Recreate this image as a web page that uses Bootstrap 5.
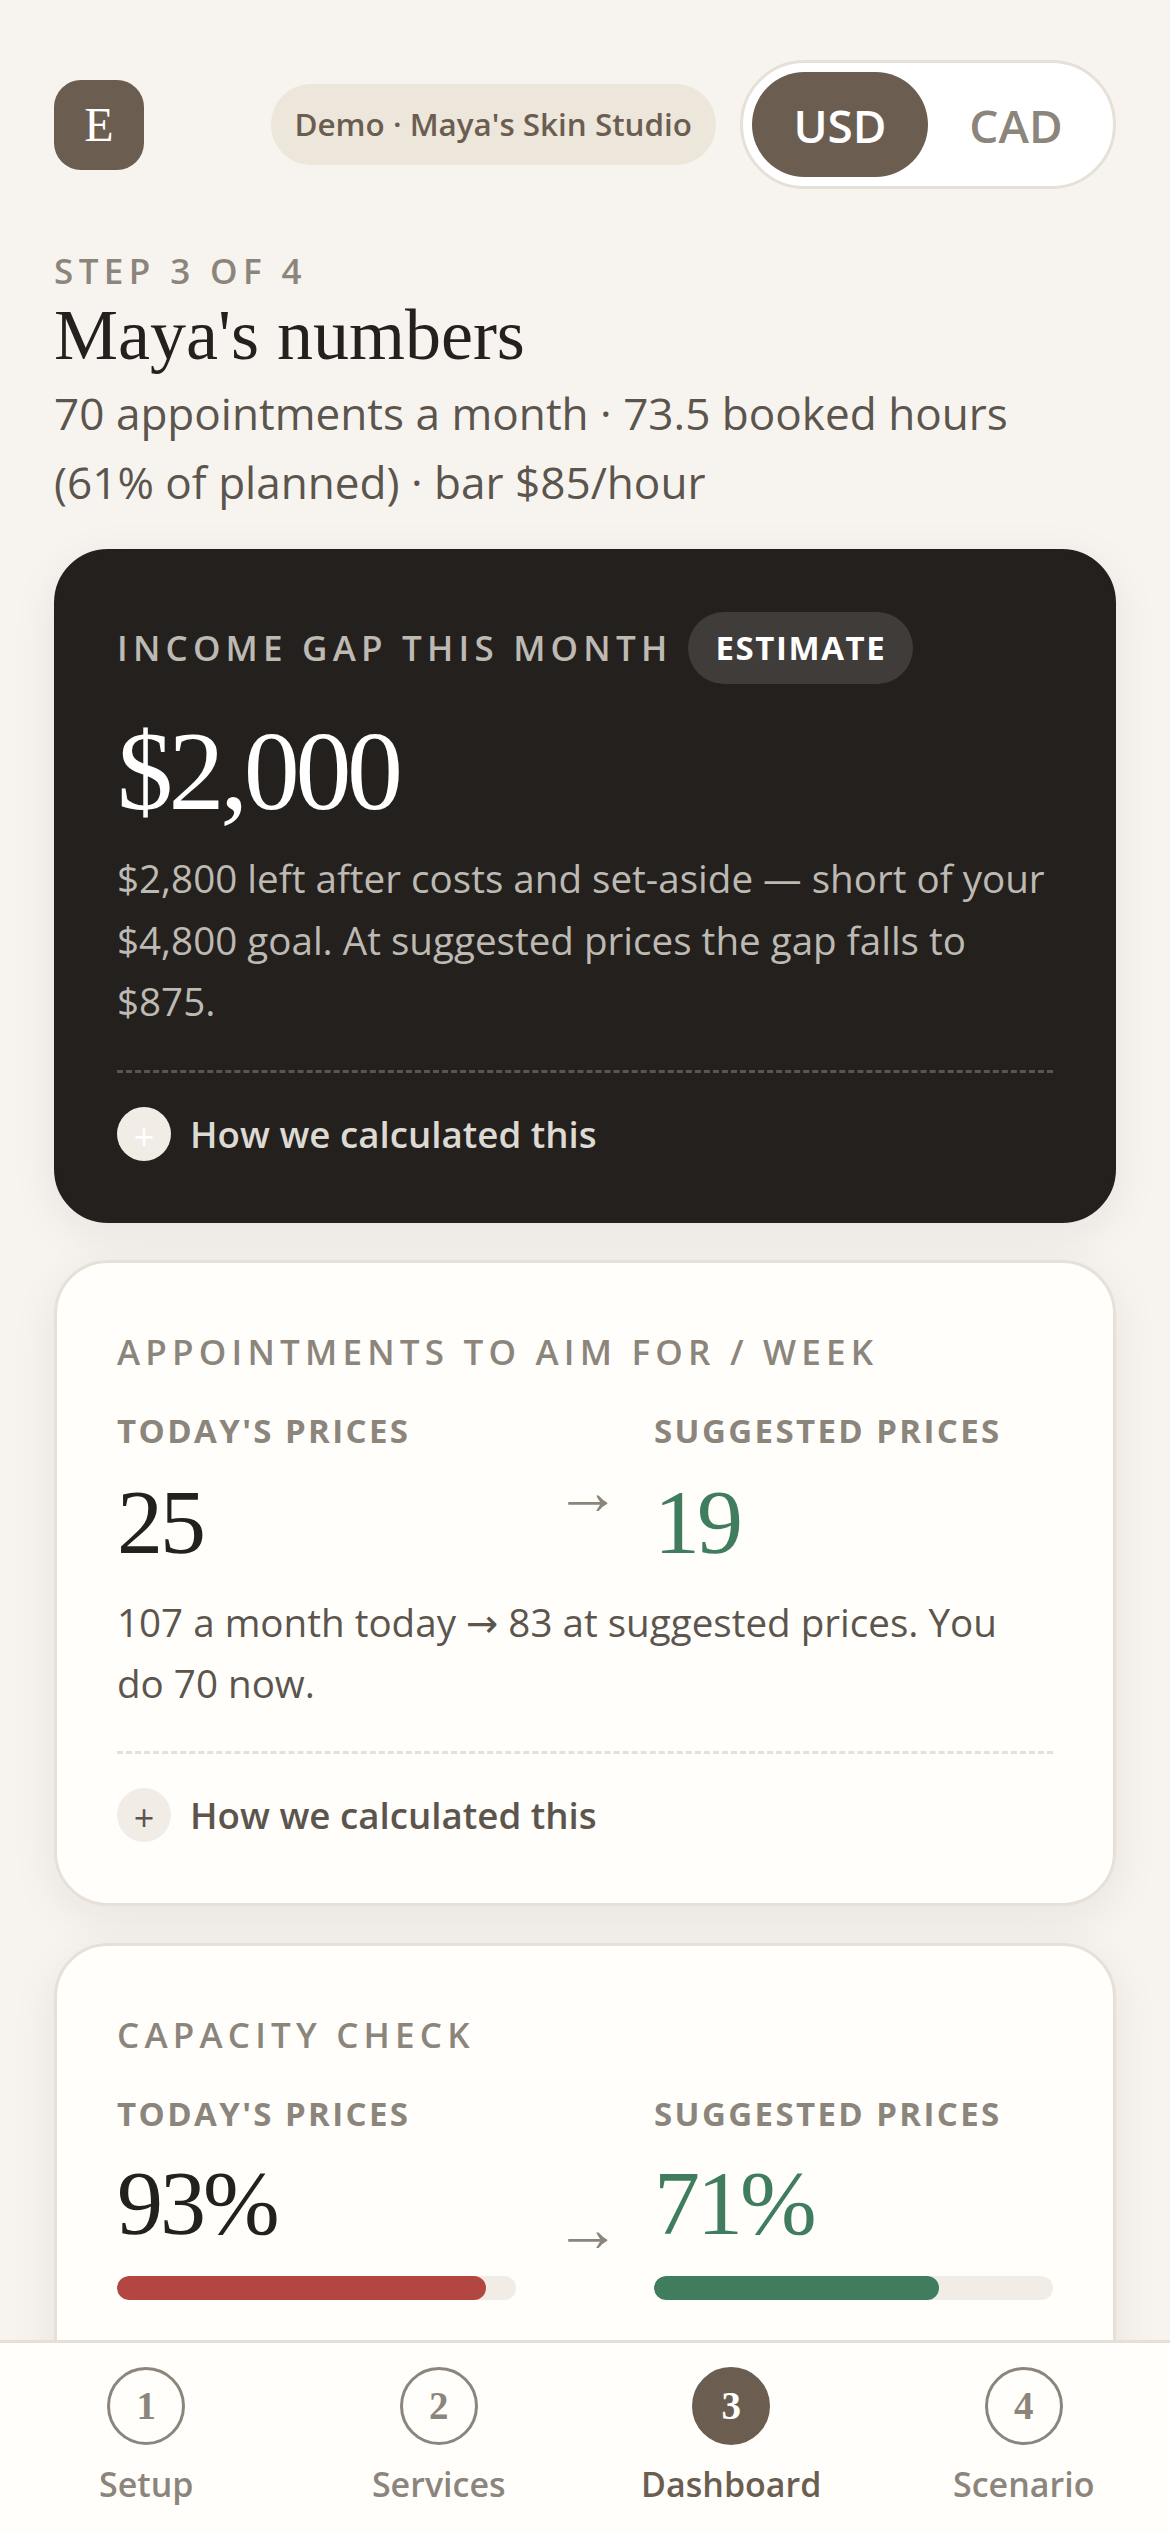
<!doctype html>
<html lang="en">
<head>
<meta charset="utf-8">
<title>Maya's numbers</title>
<link href="https://cdn.jsdelivr.net/npm/bootstrap@5.3.0/dist/css/bootstrap.min.css" rel="stylesheet">
<style>
html,body{height:2532px;overflow:hidden}
body{background:#f7f4ef;font-family:"Open Sans","Noto Sans",sans-serif;color:#23201d}
.serif{font-family:"Liberation Serif",serif}
.shell{padding:60px 54px 0}
.logo{width:90px;height:90px;border-radius:27px;background:#6b5e51;color:#fff;font-size:48px}
.demo-pill{height:81px;padding:0 24px 2px;border-radius:40px;background:#ede6db;color:#6b5e51;font-size:31.4px;font-weight:600;white-space:nowrap}
.toggle{height:129px;width:376px;padding:9px;border:3px solid #e6e0d8;border-radius:65px;background:#fff;margin-left:24px}
.toggle span{height:105px;border-radius:53px;font-size:46px;font-weight:600;color:#8c857c;padding-top:2px}
.toggle .tog-usd{width:177px;background:#6b5e51;color:#fff}
.toggle .tog-cad{width:177px}
.eyebrow{margin-top:58px;font-size:35px;line-height:48px;letter-spacing:5.4px;font-weight:600;color:#8c857c}
.page-title{font-size:72px;line-height:80px;font-weight:400;margin:0;color:#23201d}
.page-sub{font-size:44.1px;line-height:69px;color:#5c554d;margin:4px 0 0}
.stat{border-radius:54px;padding:60px;background:#fffefb;border:3px solid #e6e0d8;box-shadow:0 12px 48px rgba(35,32,29,.07);margin-top:37px}
.stat-dark{background:#24201d;border-color:#24201d;color:#fff;margin-top:32px;padding-bottom:58px}
.stat-last{padding-bottom:240px}
.kicker{font-size:35px;line-height:57px;letter-spacing:5.2px;font-weight:600;color:#8c857c;white-space:nowrap}
.stat-dark .kicker{color:#bdb9b3;line-height:50px}
.est{height:72px;padding:0 27px;border-radius:36px;background:#403c39;color:#fff;font-size:33px;font-weight:700;letter-spacing:1.6px}
.big{font-size:112px;line-height:130px;letter-spacing:-4.4px;margin-top:22px}
.stat-text{font-family:"Open Sans","DejaVu Sans",sans-serif;font-size:38.6px;line-height:61.5px;color:#5c554d;margin:0}
.stat-dark .stat-text{color:#bdb9b3;margin-top:12px}
.how{margin-top:36px;padding-top:34px;border-top:3px dashed #e6e0d8;gap:19px;font-size:36.7px;font-weight:600;color:#5c554d}
.stat-dark .how{border-top-color:#5a5551;color:#ddd9d3;margin-top:37px}
.plus{width:54px;height:54px;border-radius:50%;background:#f1ece6;color:#5c554d;font-size:36px;line-height:1;padding-top:12px;font-weight:400}
.stat-dark .plus{color:#fff}
.compare{display:grid;grid-template-columns:1fr 66px 1fr;column-gap:36px;align-items:end;margin-top:28px}
.col-label{font-size:33px;line-height:45px;letter-spacing:2.4px;font-weight:700;color:#8c857c;white-space:nowrap}
.num{font-size:92px;line-height:108px;margin-top:15px;letter-spacing:-3px}
.good{color:#3f7d5e}
.arrow{font-size:66px;font-weight:700;line-height:1;color:#8c857c;text-align:center;padding:0 0 51px 3px}
.compare-bars .arrow{padding-bottom:38px}
.compare-bars .num{margin-top:13px}
.meter{height:24px;border-radius:12px;background:#f1ece6;margin-top:19px;overflow:hidden}
.meter div{height:100%;border-radius:12px}
.tabbar{height:192px;background:#fffefb;border-top:3px solid #e6e0d8;padding-top:24px}
.tab{width:25%;font-size:34px;font-weight:600;color:#8c857c;line-height:48px}
.tab.active{color:#6b5e51}
.dot{width:78px;height:78px;border-radius:50%;border:3px solid #8c857c;font-size:39px;font-weight:700;margin-bottom:15px}
.tab.active .dot{background:#6b5e51;border-color:#6b5e51;color:#fff}
</style>
</head>
<body>
<div class="shell">
  <header class="d-flex align-items-center justify-content-between">
    <div class="logo serif d-flex align-items-center justify-content-center">E</div>
    <div class="d-flex align-items-center">
      <div class="demo-pill d-flex align-items-center">Demo · Maya's Skin Studio</div>
      <div class="toggle d-flex"><span class="tog-usd d-flex align-items-center justify-content-center">USD</span><span class="tog-cad d-flex align-items-center justify-content-center">CAD</span></div>
    </div>
  </header>

  <div class="eyebrow">STEP 3 OF 4</div>
  <h1 class="page-title serif">Maya's numbers</h1>
  <p class="page-sub">70 appointments a month · 73.5 booked hours (61% of planned) · bar $85/hour</p>

  <section class="stat stat-dark">
    <div class="d-flex align-items-center gap-3"><span class="kicker">INCOME GAP THIS MONTH</span><span class="est d-flex align-items-center">ESTIMATE</span></div>
    <div class="big serif">$2,000</div>
    <p class="stat-text">$2,800 left after costs and set-aside — short of your $4,800 goal. At suggested prices the gap falls to $875.</p>
    <div class="how d-flex align-items-center"><span class="plus d-flex justify-content-center">+</span>How we calculated this</div>
  </section>

  <section class="stat">
    <div class="kicker">APPOINTMENTS TO AIM FOR / WEEK</div>
    <div class="compare">
      <div><div class="col-label">TODAY'S PRICES</div><div class="num serif">25</div></div>
      <div class="arrow serif">→</div>
      <div><div class="col-label">SUGGESTED PRICES</div><div class="num serif good">19</div></div>
    </div>
    <p class="stat-text mt-3">107 a month today → 83 at suggested prices. You do 70 now.</p>
    <div class="how d-flex align-items-center"><span class="plus d-flex justify-content-center">+</span>How we calculated this</div>
  </section>

  <section class="stat stat-last">
    <div class="kicker">CAPACITY CHECK</div>
    <div class="compare compare-bars">
      <div><div class="col-label">TODAY'S PRICES</div><div class="num serif">93%</div><div class="meter"><div style="width:92.5%;background:#b34640"></div></div></div>
      <div class="arrow serif">→</div>
      <div><div class="col-label">SUGGESTED PRICES</div><div class="num serif good">71%</div><div class="meter"><div style="width:71.5%;background:#3f7d5e"></div></div></div>
    </div>
  </section>
</div>

<nav class="tabbar fixed-bottom d-flex">
  <div class="tab d-flex flex-column align-items-center"><span class="dot serif d-flex align-items-center justify-content-center">1</span>Setup</div>
  <div class="tab d-flex flex-column align-items-center"><span class="dot serif d-flex align-items-center justify-content-center">2</span>Services</div>
  <div class="tab active d-flex flex-column align-items-center"><span class="dot serif d-flex align-items-center justify-content-center">3</span>Dashboard</div>
  <div class="tab d-flex flex-column align-items-center"><span class="dot serif d-flex align-items-center justify-content-center">4</span>Scenario</div>
</nav>
</body>
</html>
